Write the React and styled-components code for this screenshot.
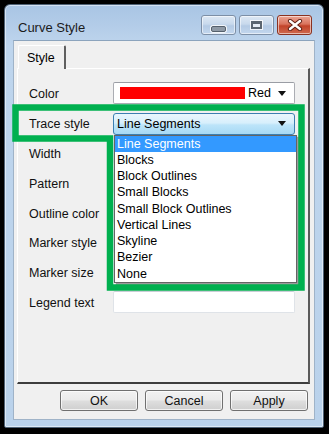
import React from "react";
import styled, { createGlobalStyle } from "styled-components";

const GlobalStyle = createGlobalStyle`
    html, body {
        margin: 0;
        padding: 0;
        background: #000000;
    }
    body {
        font-family: "Liberation Sans", Arial, sans-serif;
        font-size: 12.5px;
        color: #000000;
    }
`;

const rows = [
    "Color",
    "Trace style",
    "Width",
    "Pattern",
    "Outline color",
    "Marker style",
    "Marker size",
    "Legend text",
];

const traceOptions = [
    "Line Segments",
    "Blocks",
    "Block Outlines",
    "Small Blocks",
    "Small Block Outlines",
    "Vertical Lines",
    "Skyline",
    "Bezier",
    "None",
];

const Page = styled.div`
    position: relative;
    width: 329px;
    height: 434px;
    padding: 4px 5px 6px 4px;
    box-sizing: border-box;
    background: #000000;
`;

const Window = styled.div`
    width: 320px;
    height: 424px;
    box-sizing: border-box;
    border: 1px solid #4f6276;
    border-radius: 6px 6px 2px 2px;
    background: linear-gradient(#a9c5e4 0px, #b3cce8 20px, #bed5ed 40px, #bad2eb 100%);
    display: flex;
    flex-direction: column;
    box-shadow: inset 0 0 0 1px rgba(255, 255, 255, 0.5);
`;

const TitleBar = styled.div`
    height: 35px;
    display: flex;
    align-items: center;
    padding: 0 11px 0 13px;
`;

const Title = styled.div`
    flex: 1;
    font-size: 13px;
    color: #1b1b1b;
    padding-top: 9px;
`;

const CaptionButtons = styled.div`
    display: flex;
    gap: 3px;
    align-self: flex-start;
    margin-top: 10px;
`;

const CaptionButton = styled.div`
    width: 35px;
    height: 20px;
    box-sizing: border-box;
    border: 1px solid ${p => (p.$close ? "#8a3221" : "#7d8fa6")};
    border-radius: 3px;
    background: ${p =>
        p.$close
            ? "linear-gradient(#eba594 0%, #d9735d 45%, #c2432a 55%, #cf6a4f 100%)"
            : "linear-gradient(#dde8f4 0%, #c8d9ec 45%, #b4cae4 55%, #c3d7ee 100%)"};
    box-shadow: inset 0 0 0 1px rgba(255, 255, 255, 0.55);
    display: flex;
    align-items: center;
    justify-content: center;
`;

const MinGlyph = styled.div`
    width: 13px;
    height: 4px;
    margin-top: 7px;
    border-radius: 2px;
    background: #8f9aa6;
    border: 1px solid #55606c;
    box-shadow: 0 0 0 1px rgba(255, 255, 255, 0.8);
`;

const MaxGlyph = styled.div`
    width: 11px;
    height: 8px;
    box-sizing: border-box;
    border: 2px solid #5c6670;
    border-top-width: 3px;
    background: #e8eef5;
    box-shadow: 0 0 0 1px rgba(255, 255, 255, 0.8);
`;

const Client = styled.div`
    flex: 1;
    margin: 0 8px 7px 8px;
    background: #f0f0f0;
    border: 1px solid #9fb3c8;
    border-top-color: #8ca4bd;
    display: flex;
    flex-direction: column;
    padding: 4px 4px 0 3px;
`;

const TabRow = styled.div`
    display: flex;
    padding-left: 1px;
`;

const Tab = styled.div`
    height: 24px;
    padding: 0 9px 0 8px;
    display: flex;
    align-items: center;
    box-sizing: border-box;
    border-top: 1px solid #ffffff;
    border-left: 1px solid #ffffff;
    border-right: 2px solid #5f5f5f;
    border-radius: 2px 2px 0 0;
    background: #f0f0f0;
    margin-bottom: -1px;
    position: relative;
    z-index: 1;
`;

const Panel = styled.div`
    position: relative;
    height: 316px;
    box-sizing: border-box;
    border-top: 1px solid #ffffff;
    border-left: 1px solid #ffffff;
    border-right: 2px solid #5a5a5a;
    border-bottom: 2px solid #3d3d3d;
    padding: 13px 0 0 11px;
`;

const Form = styled.div`
    display: grid;
    grid-template-columns: 84px 182px;
    row-gap: 7.7px;
`;

const Label = styled.div`
    height: 22px;
    padding-top: 2px;
    box-sizing: border-box;
    display: flex;
    align-items: center;
    color: #111111;
`;

const Field = styled.div`
    position: relative;
    height: 22px;
    box-sizing: border-box;
    border: 1px solid #dfe3e8;
    border-top-color: #c9ced6;
    background: #ffffff;
    display: flex;
    align-items: center;
    border-radius: 2px;
`;

const ColorField = styled(Field)`
    border: 1px solid #abadb3;
    border-top-color: #9a9da4;
    padding: 0 6px 0 6px;
`;

const Swatch = styled.div`
    width: 125px;
    height: 12px;
    background: #ff0000;
    margin-right: 3px;
`;

const Arrow = styled.div`
    margin-left: auto;
    width: 0;
    height: 0;
    border-left: 4px solid transparent;
    border-right: 4px solid transparent;
    border-top: 5px solid #111111;
    margin-right: 2px;
`;

const Combo = styled.div`
    position: relative;
    height: 22px;
    margin-top: 1px;
    box-sizing: border-box;
    border: 1px solid #3c7fb1;
    border-radius: 3px;
    background: linear-gradient(#eaf6fd 0%, #d7effc 45%, #bce4f9 55%, #a7d9f5 100%);
    display: flex;
    align-items: center;
    padding: 0 6px 0 3px;
`;

const DropList = styled.div`
    position: absolute;
    top: 21px;
    left: 0px;
    width: 183px;
    box-sizing: border-box;
    border: 1px solid #646464;
    background: #ffffff;
    box-shadow: 2px 2px 1px rgba(0, 0, 0, 0.35);
    z-index: 2;
`;

const Option = styled.div`
    height: 16.25px;
    line-height: 16px;
    padding-left: 2px;
    background: ${p => (p.$selected ? "#3399ff" : "transparent")};
    color: ${p => (p.$selected ? "#ffffff" : "#000000")};
    white-space: nowrap;
`;

const ButtonRow = styled.div`
    display: flex;
    justify-content: flex-end;
    gap: 7px;
    padding: 6px 2px 0 0;
`;

const Button = styled.button`
    width: 78px;
    height: 21px;
    border: 1px solid #707070;
    border-radius: 3px;
    background: linear-gradient(#f2f2f2 0%, #ebebeb 45%, #dddddd 55%, #cfcfcf 100%);
    box-shadow: inset 0 0 0 1px rgba(255, 255, 255, 0.7);
    font-family: "Liberation Sans", Arial, sans-serif;
    font-size: 12.5px;
    color: #111111;
    padding: 0;
`;

const Annotation = styled.svg`
    position: absolute;
    left: 0;
    top: 0;
    pointer-events: none;
    z-index: 5;
`;

const CloseIcon = () => (
    <svg width="16" height="12" viewBox="0 0 16 12">
        <path d="M3 2 L13 10 M13 2 L3 10" stroke="#5a1d12" strokeWidth="4.2" strokeLinecap="round" />
        <path d="M3 2 L13 10 M13 2 L3 10" stroke="#ffffff" strokeWidth="2.4" strokeLinecap="round" />
    </svg>
);

const Control = ({ name }) => {
    if (name === "Color") {
        return (
            <ColorField>
                <Swatch />
                <span>Red</span>
                <Arrow />
            </ColorField>
        );
    }
    if (name === "Trace style") {
        return (
            <Combo>
                <span>Line Segments</span>
                <Arrow />
                <DropList>
                    {traceOptions.map((o, i) => (
                        <Option key={o} $selected={i === 0}>{o}</Option>
                    ))}
                </DropList>
            </Combo>
        );
    }
    return <Field />;
};

export default function App() {
    return (
        <Page>
            <GlobalStyle />
            <Window>
                <TitleBar>
                    <Title>Curve Style</Title>
                    <CaptionButtons>
                        <CaptionButton><MinGlyph /></CaptionButton>
                        <CaptionButton><MaxGlyph /></CaptionButton>
                        <CaptionButton $close><CloseIcon /></CaptionButton>
                    </CaptionButtons>
                </TitleBar>
                <Client>
                    <TabRow>
                        <Tab>Style</Tab>
                    </TabRow>
                    <Panel>
                        <Form>
                            {rows.map(r => (
                                <React.Fragment key={r}>
                                    <Label>{r}</Label>
                                    <Control name={r} />
                                </React.Fragment>
                            ))}
                        </Form>
                    </Panel>
                    <ButtonRow>
                        <Button>OK</Button>
                        <Button>Cancel</Button>
                        <Button>Apply</Button>
                    </ButtonRow>
                </Client>
            </Window>
            <Annotation width="329" height="434" viewBox="0 0 329 434">
                <path
                    d="M15.5 107.5 H301.5 V287.5 H110 V138.5 H15.5 Z"
                    fill="none"
                    stroke="#00b04f"
                    strokeWidth="6.5"
                    strokeLinejoin="miter"
                />
            </Annotation>
        </Page>
    );
}
